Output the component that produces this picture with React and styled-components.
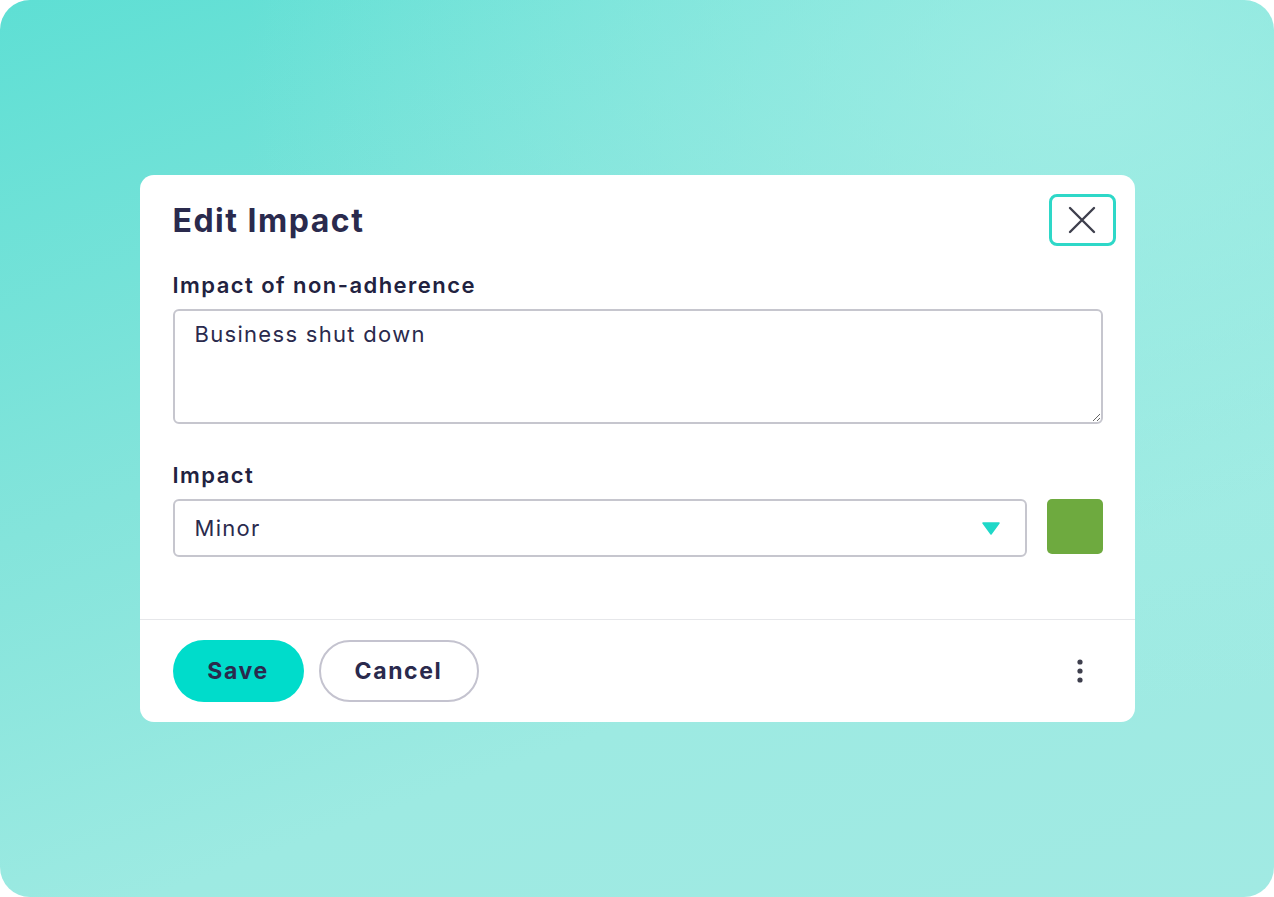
import React from 'react';
import styled, { createGlobalStyle } from 'styled-components';

const GlobalStyle = createGlobalStyle`
  html, body {
    margin: 0;
    padding: 0;
    background: #ffffff;
  }
  body {
    font-family: Inter, "Noto Sans", sans-serif;
    color: #2a2a4d;
  }
`;

const Backdrop = styled.div`
  width: 1274px;
  height: 897px;
  border-radius: 30px;
  background:
    radial-gradient(ellipse at 85% 10%, rgba(170, 240, 232, 0.7), rgba(170, 240, 232, 0) 55%),
    linear-gradient(160deg, #5edfd4 0%, #84e4db 40%, #9deae2 70%, #a1eae3 100%);
  display: flex;
  align-items: center;
  justify-content: center;
`;

const Modal = styled.div`
  width: 995px;
  background: #ffffff;
  border-radius: 14px;
  display: flex;
  flex-direction: column;
  overflow: hidden;
`;

const Header = styled.div`
  display: flex;
  align-items: center;
  justify-content: space-between;
  padding: 19px 19px 0 33px;
`;

const Title = styled.h2`
  margin: 0;
  font-size: 32px;
  font-weight: 700;
  letter-spacing: 1.5px;
  color: #2a2a4d;
`;

const CloseButton = styled.button`
  width: 67px;
  height: 52px;
  border: 3px solid #2ed8c8;
  border-radius: 8px;
  background: #ffffff;
  display: flex;
  align-items: center;
  justify-content: center;
  padding: 0;
  cursor: pointer;
`;

const Body = styled.div`
  padding: 27px 32px 62px 33px;
  display: flex;
  flex-direction: column;
`;

const Label = styled.label`
  display: block;
  font-size: 22px;
  font-weight: 600;
  line-height: 24px;
  letter-spacing: 1.45px;
  color: #222240;
  margin-bottom: 12px;
  margin-top: ${p => (p.$spaced ? '39px' : '0')};
`;

const TextArea = styled.textarea`
  box-sizing: border-box;
  width: 100%;
  height: 115px;
  border: 2px solid #c6c6ce;
  border-radius: 6px;
  padding: 10px 20px;
  font-family: Inter, "Noto Sans", sans-serif;
  font-size: 22px;
  line-height: 26px;
  letter-spacing: 1.3px;
  color: #2a2a4d;
  resize: vertical;
  outline: none;
`;

const SelectRow = styled.div`
  display: flex;
  align-items: flex-start;
  gap: 20px;
`;

const Select = styled.div`
  box-sizing: border-box;
  flex: 1;
  height: 58px;
  border: 2px solid #c6c6ce;
  border-radius: 6px;
  padding: 0 25px 0 20px;
  display: flex;
  align-items: center;
  justify-content: space-between;
  font-size: 22px;
  letter-spacing: 1.3px;
  color: #2a2a4d;
`;

const Swatch = styled.div`
  width: 56px;
  height: 55px;
  border-radius: 5px;
  background: ${p => p.$color};
`;

const Footer = styled.div`
  border-top: 1px solid #e6e7ea;
  padding: 20px 45px 20px 33px;
  display: flex;
  align-items: center;
  gap: 15px;
`;

const PillButton = styled.button`
  box-sizing: border-box;
  height: 62px;
  width: ${p => p.$width}px;
  border-radius: 31px;
  font-family: Inter, "Noto Sans", sans-serif;
  font-size: 23px;
  font-weight: 700;
  letter-spacing: 1.6px;
  color: #2a2a4d;
  cursor: pointer;
  background: ${p => (p.$primary ? '#00dccb' : '#ffffff')};
  border: ${p => (p.$primary ? 'none' : '2px solid #c4c3cf')};
`;

const MoreButton = styled.button`
  margin-left: auto;
  background: none;
  border: none;
  padding: 0;
  display: flex;
  align-items: center;
  justify-content: center;
  width: 20px;
  height: 34px;
  cursor: pointer;
`;

const App = () => (
  <>
    <GlobalStyle />
    <Backdrop>
      <Modal>
        <Header>
          <Title>Edit Impact</Title>
          <CloseButton aria-label="Close">
            <svg width="30" height="30" viewBox="0 0 30 30">
              <path d="M3 3 L27 27 M27 3 L3 27" stroke="#3e3f4d" strokeWidth="2.4" strokeLinecap="round" />
            </svg>
          </CloseButton>
        </Header>
        <Body>
          <Label>Impact of non-adherence</Label>
          <TextArea defaultValue="Business shut down" />
          <Label $spaced>Impact</Label>
          <SelectRow>
            <Select>
              <span>Minor</span>
              <svg width="18" height="13" viewBox="0 0 18 13">
                <path d="M1 1 H17 L9 12 Z" fill="#1fd8c8" stroke="#1fd8c8" strokeWidth="1.5" strokeLinejoin="round" />
              </svg>
            </Select>
            <Swatch $color="#6eaa3f" />
          </SelectRow>
        </Body>
        <Footer>
          <PillButton $primary $width={131}>Save</PillButton>
          <PillButton $width={160}>Cancel</PillButton>
          <MoreButton aria-label="More">
            <svg width="8" height="28" viewBox="0 0 8 28">
              <circle cx="4" cy="5" r="2.6" fill="#3e3f4d" />
              <circle cx="4" cy="14" r="2.6" fill="#3e3f4d" />
              <circle cx="4" cy="23" r="2.6" fill="#3e3f4d" />
            </svg>
          </MoreButton>
        </Footer>
      </Modal>
    </Backdrop>
  </>
);

export default App;
